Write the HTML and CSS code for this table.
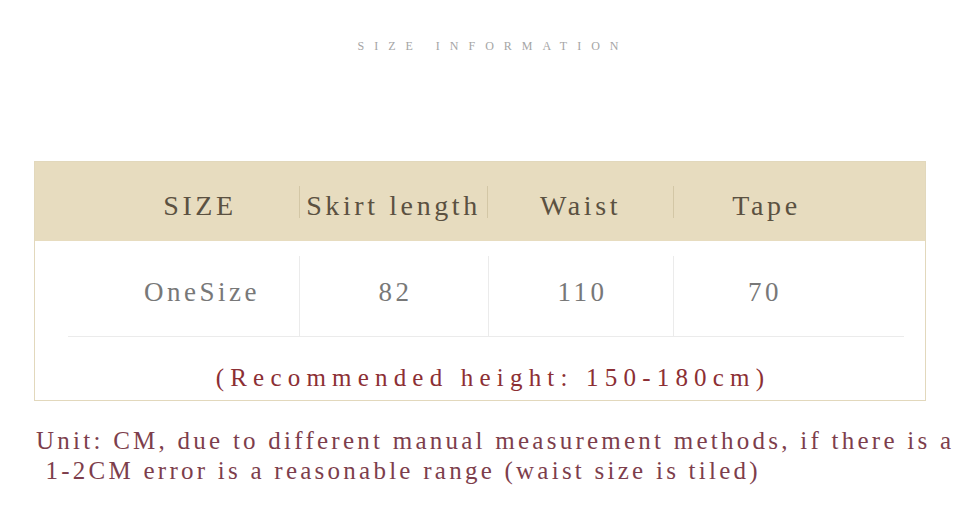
FILE: index.html
```html
<!DOCTYPE html>
<html>
<head>
<meta charset="utf-8">
<link rel="stylesheet" href="styles.css">
</head>
<body>
<div class="page">
  <div class="title">SIZE INFORMATION</div>
  <div class="box">
    <div class="head">
      <div class="hcell">SIZE</div>
      <div class="hcell sep">Skirt length</div>
      <div class="hcell sep">Waist</div>
      <div class="hcell sep">Tape</div>
    </div>
    <div class="body">
      <div class="row">
        <div class="cell first">OneSize</div>
        <div class="cell">82</div>
        <div class="cell">110</div>
        <div class="cell last">70</div>
      </div>
      <div class="rec">(Recommended height: 150-180cm)</div>
    </div>
  </div>
  <p class="note">Unit: CM, due to different manual measurement methods, if there is a<br>&nbsp;1-2CM error is a reasonable range (waist size is tiled)</p>
</div>
</body>
</html>
```
FILE: styles.css
```css
html, body {
  margin: 0;
  padding: 0;
  background: #ffffff;
}
.page {
  width: 976px;
  height: 516px;
  font-family: "Liberation Serif", "DejaVu Serif", serif;
  overflow: hidden;
}
.title {
  padding-top: 39px;
  height: 15px;
  text-align: center;
  font-size: 12px;
  letter-spacing: 10px;
  color: #a5a5a5;
  padding-left: 10px;
}
.box {
  margin: 107px 0 0 34px;
  width: 890px;
  border: 1px solid #e2d8bc;
}
.head {
  display: grid;
  grid-template-columns: 198px 188px 186px 186px;
  padding-left: 66px;
  height: 79px;
  align-items: center;
  background: #e7dcbf;
}
.hcell {
  text-align: center;
  font-size: 28px;
  letter-spacing: 3.6px;
  color: #5b5141;
  line-height: 24px;
  padding-top: 8px;
}
.hcell.sep {
  border-left: 1px solid #d3c7a6;
}
.body {
  padding: 15px 21px 0 33px;
  height: 144px;
}
.row {
  display: grid;
  grid-template-columns: 231px 189px 185px 231px;
  height: 80px;
  border-bottom: 1px solid #ebebeb;
}
.cell {
  display: flex;
  align-items: center;
  justify-content: center;
  font-size: 27px;
  letter-spacing: 3.5px;
  color: #787878;
  border-left: 1px solid #ebebeb;
  padding-bottom: 8px;
  padding-left: 3px;
}
.cell.first {
  border-left: none;
  padding-left: 37px;
}
.cell.last {
  padding-right: 51px;
}
.rec {
  text-align: center;
  font-size: 25px;
  letter-spacing: 6.2px;
  color: #8c2f34;
  padding-top: 27px;
  padding-left: 14px;
}
.note {
  margin: 25px 0 0 36px;
  font-size: 25px;
  line-height: 30px;
  letter-spacing: 3.25px;
  color: #7d3e4c;
  white-space: nowrap;
}
```
